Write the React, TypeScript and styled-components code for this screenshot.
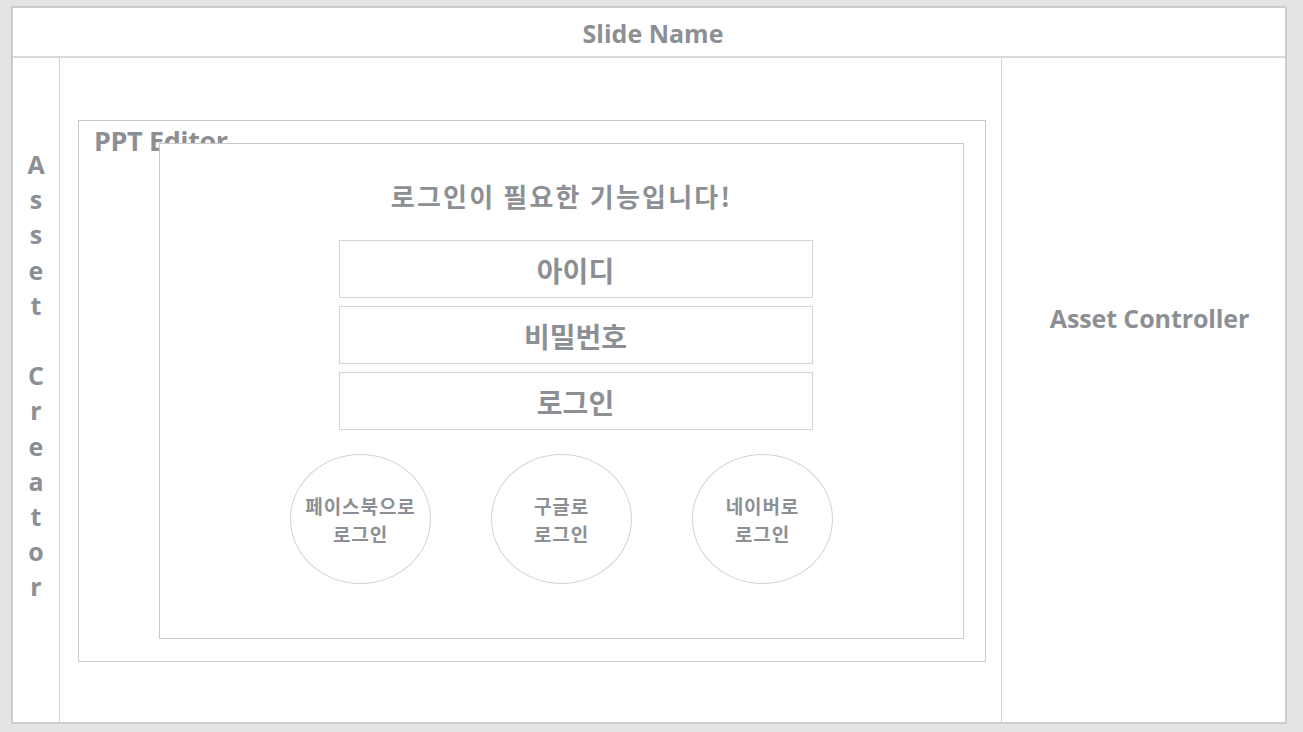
import React from "react";
import styled, { createGlobalStyle } from "styled-components";

const GlobalStyle = createGlobalStyle`
  html, body { margin: 0; padding: 0; background: #e4e4e4; }
  body { font-family: "Open Sans", "Noto Sans CJK KR", sans-serif; }
  * { box-sizing: border-box; }
`;

const TEXT = "#8c8f93";
const LINE = "#d2d2d2";

const Page = styled.div`
  width: 1303px;
  height: 732px;
  padding: 6px 16px 8px 11px;
`;

const Slide = styled.div`
  width: 1276px;
  height: 718px;
  border: 2px solid #cdcdcd;
  background: #fff;
  display: flex;
  flex-direction: column;
`;

const TitleBar = styled.div`
  height: 50px;
  border-bottom: 2px solid #dadada;
  display: flex;
  align-items: center;
  justify-content: center;
  color: ${TEXT};
  font: 700 25px/1 "Open Sans", sans-serif;
  padding: 3px 0 0 8px;
`;

const Body = styled.div`
  flex: 1;
  display: flex;
  min-height: 0;
`;

const LeftCol = styled.div`
  width: 47px;
  border-right: 1px solid ${LINE};
  display: flex;
  flex-direction: column;
  align-items: center;
  padding-top: 89px;
`;

const VLetter = styled.span`
  height: 35.2px;
  display: flex;
  align-items: center;
  color: ${TEXT};
  font: 700 25px/1 "Open Sans", sans-serif;
`;

const Middle = styled.div`
  width: 941px;
  padding: 62px 15px 60px 18px;
  display: flex;
`;

const EditorBox = styled.div`
  position: relative;
  flex: 1;
  border: 1px solid #cacaca;
  padding: 4px 0 0 15px;
`;

const EditorLabel = styled.div`
  color: ${TEXT};
  font: 700 27px/1.2 "Open Sans", sans-serif;
  letter-spacing: -0.4px;
`;

const Modal = styled.div`
  position: absolute;
  top: 22px;
  left: 80px;
  right: 21px;
  bottom: 22px;
  background: #fff;
  border: 1px solid #cacaca;
  display: flex;
  flex-direction: column;
  align-items: center;
  padding-top: 33px;
`;

const ModalTitle = styled.div`
  color: ${TEXT};
  font: 700 26px/38px "Noto Sans CJK KR", sans-serif;
  letter-spacing: 2.2px;
  margin-bottom: 25px;
`;

const Fields = styled.div`
  display: flex;
  flex-direction: column;
  gap: 8px;
  margin-left: 28px;
`;

const Field = styled.div`
  width: 474px;
  height: 58px;
  border: 1.5px solid #d3d3d3;
  display: flex;
  align-items: center;
  justify-content: center;
  color: ${TEXT};
  font: 700 28px/1 "Noto Sans CJK KR", sans-serif;
  padding-top: 2px;
`;

const Socials = styled.div`
  display: flex;
  gap: 60px;
  margin-top: 24px;
`;

const Circle = styled.div`
  width: 141px;
  height: 130px;
  border-radius: 50%;
  border: 1px solid #d3d3d3;
  display: flex;
  flex-direction: column;
  align-items: center;
  justify-content: center;
  text-align: center;
  padding-top: 1px;
`;

const CircleLine = styled.span`
  display: block;
  height: 27.6px;
  color: ${TEXT};
  font: 700 19px/27.6px "Noto Sans CJK KR", sans-serif;
  letter-spacing: 0.9px;
`;

const RightCol = styled.div`
  flex: 1;
  border-left: 1px solid ${LINE};
  display: flex;
  align-items: center;
  justify-content: center;
  color: ${TEXT};
  font: 700 25px/1 "Open Sans", sans-serif;
  letter-spacing: -0.1px;
  padding: 0 0 143px 12px;
`;

const vertical = "Asset Creator".split("");

const socials = [
  ["페이스북으로", "로그인"],
  ["구글로", "로그인"],
  ["네이버로", "로그인"],
];

export default function App() {
  return (
    <>
      <GlobalStyle />
      <Page>
        <Slide>
          <TitleBar>Slide Name</TitleBar>
          <Body>
            <LeftCol>
              {vertical.map((c, i) => (
                <VLetter key={i}>{c === " " ? "\u00a0" : c}</VLetter>
              ))}
            </LeftCol>
            <Middle>
              <EditorBox>
                <EditorLabel>PPT Editor</EditorLabel>
                <Modal>
                  <ModalTitle>로그인이 필요한 기능입니다!</ModalTitle>
                  <Fields>
                    <Field>아이디</Field>
                    <Field>비밀번호</Field>
                    <Field>로그인</Field>
                  </Fields>
                  <Socials>
                    {socials.map((lines, i) => (
                      <Circle key={i}>
                        {lines.map((l, j) => (
                          <CircleLine key={j}>{l}</CircleLine>
                        ))}
                      </Circle>
                    ))}
                  </Socials>
                </Modal>
              </EditorBox>
            </Middle>
            <RightCol>Asset Controller</RightCol>
          </Body>
        </Slide>
      </Page>
    </>
  );
}
